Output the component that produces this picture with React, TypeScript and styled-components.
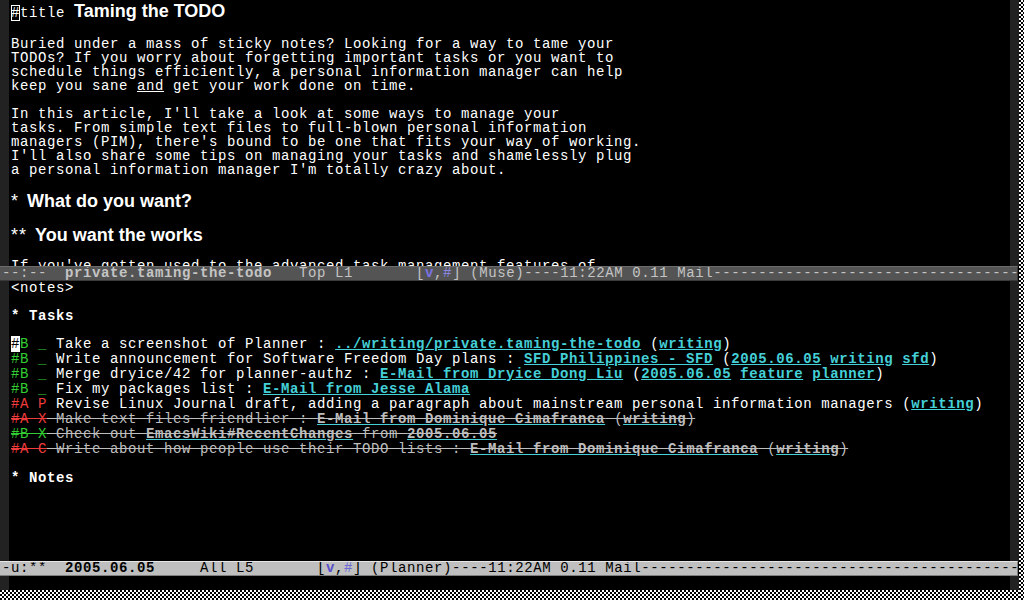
import React from 'react';
import styled, { createGlobalStyle } from 'styled-components';

const MONO = `"Liberation Mono", "DejaVu Sans Mono", monospace`;
const SANS = `"Liberation Sans", Arial, sans-serif`;

const LINK = '#45d0d8';
const GREEN = '#32cd32';
const RED = '#f03c3c';
const DONE = '#bebebe';

const Global = createGlobalStyle`
  html, body { margin: 0; padding: 0; background: #000; }
  body { width: 1024px; height: 600px; overflow: hidden; }
`;

const Screen = styled.div`
  width: 1024px;
  height: 600px;
  background: #000;
  display: grid;
  grid-template-columns: 1019px 5px;
  grid-template-rows: 590px 10px;
  grid-template-areas: "emacs side" "bottom side";
  overflow: hidden;
`;

const Dither = styled.div<{ $area: string }>`
  grid-area: ${p => p.$area};
  background-color: #000;
  background-image: repeating-conic-gradient(#fff 0 25%, #000 0 50%);
  background-size: 4px 4px;
`;

const Emacs = styled.div`
  grid-area: emacs;
  display: flex;
  flex-direction: column;
  font-family: ${MONO};
  font-size: 14px;
  letter-spacing: 0.6px;
  color: #fff;
`;

const WindowBody = styled.div<{ $h: number }>`
  height: ${p => p.$h}px;
  display: grid;
  grid-template-columns: 9px 1fr 9px;
  overflow: hidden;
`;

const Fringe = styled.div`
  background: #222;
`;

const Buffer = styled.div`
  padding-left: 2px;
  overflow: hidden;
  min-width: 0;
`;

const Line = styled.div<{ $h?: number }>`
  height: ${p => p.$h ?? 14}px;
  line-height: ${p => p.$h ?? 14}px;
  white-space: pre;
`;

const TitleLine = styled.div`
  height: 23px;
  line-height: 23px;
  white-space: pre;
  font-family: ${SANS};
  font-size: 18px;
  letter-spacing: normal;
`;

const MonoSpan = styled.span`
  font-family: ${MONO};
  font-size: 14px;
  letter-spacing: 0.6px;
  line-height: 14px;
`;

const HollowCursor = styled(MonoSpan)`
  outline: 1px solid #fff;
  outline-offset: -1px;
`;

const TitleText = styled.span`
  font-weight: bold;
`;

const Heading = styled.div`
  height: 20px;
  line-height: 20px;
  white-space: pre;
  font-family: ${SANS};
  font-size: 18px;
  font-weight: bold;
  letter-spacing: normal;
`;

const Stars = styled.span`
  font-weight: normal;
  letter-spacing: 1px;
  margin-right: 8px;
`;

const Under = styled.span`
  text-decoration: underline;
`;

const BoldLine = styled(Line)`
  font-weight: bold;
`;

const Cursor = styled.span`
  background: #fff;
  color: #000;
`;

const Pri = styled.span<{ $p: 'A' | 'B' }>`
  color: ${p => (p.$p === 'A' ? RED : GREEN)};
`;

const Link = styled.span`
  color: ${LINK};
  font-weight: bold;
  text-decoration: underline;
`;

const Done = styled.span<{ $c?: string }>`
  color: ${p => p.$c ?? DONE};
  text-decoration: line-through;
`;

const DoneLink = styled.span`
  font-weight: bold;
  text-decoration: underline;
  text-decoration-color: ${LINK};
`;

const ModeLine = styled.div<{ $active?: boolean }>`
  height: 15px;
  box-sizing: border-box;
  line-height: 13px;
  margin-right: 1px;
  padding-left: 2px;
  white-space: pre;
  overflow: hidden;
  background: ${p => (p.$active ? '#bfbfbf' : '#545454')};
  color: ${p => (p.$active ? '#000' : '#c4c4c4')};
  border-top: 1px solid ${p => (p.$active ? '#e6e6e6' : '#6c6c6c')};
  border-bottom: 1px solid ${p => (p.$active ? '#7f7f7f' : '#3a3a3a')};
  border-right: 1px solid ${p => (p.$active ? '#7f7f7f' : '#3a3a3a')};
`;

const BufName = styled.span`
  font-weight: bold;
`;

const ModeV = styled.span<{ $active?: boolean }>`
  font-weight: bold;
  color: ${p => (p.$active ? '#5a4fcc' : '#7a72e0')};
`;

const ModeHash = styled.span<{ $active?: boolean }>`
  color: ${p => (p.$active ? '#6c68d8' : '#8a86e0')};
`;

const DASHES = '-'.repeat(130);

const TaskLine = styled(Line).attrs({ $h: 15 })``;

function Window1() {
  return (
    <Buffer>
      <TitleLine>
        <HollowCursor>#</HollowCursor>
        <MonoSpan>title </MonoSpan>
        <TitleText>Taming the TODO</TitleText>
      </TitleLine>
      <Line />
      <Line>Buried under a mass of sticky notes? Looking for a way to tame your</Line>
      <Line>TODOs? If you worry about forgetting important tasks or you want to</Line>
      <Line>schedule things efficiently, a personal information manager can help</Line>
      <Line>
        keep you sane <Under>and</Under> get your work done on time.
      </Line>
      <Line />
      <Line>In this article, I'll take a look at some ways to manage your</Line>
      <Line>tasks. From simple text files to full-blown personal information</Line>
      <Line>managers (PIM), there's bound to be one that fits your way of working.</Line>
      <Line>I'll also share some tips on managing your tasks and shamelessly plug</Line>
      <Line>a personal information manager I'm totally crazy about.</Line>
      <Line />
      <Heading>
        <Stars>*</Stars>What do you want?
      </Heading>
      <Line />
      <Heading>
        <Stars>**</Stars>You want the works
      </Heading>
      <Line />
      <Line>If you've gotten used to the advanced task management features of</Line>
    </Buffer>
  );
}

function Window2() {
  return (
    <Buffer>
      <Line>{'<notes>'}</Line>
      <Line />
      <BoldLine>* Tasks</BoldLine>
      <Line />
      <TaskLine>
        <Cursor>#</Cursor>
        <Pri $p="B">B _</Pri> Take a screenshot of Planner : <Link>../writing/private.taming-the-todo</Link> (
        <Link>writing</Link>)
      </TaskLine>
      <TaskLine>
        <Pri $p="B">#B _</Pri> Write announcement for Software Freedom Day plans : <Link>SFD Philippines - SFD</Link> (
        <Link>2005.06.05</Link> <Link>writing</Link> <Link>sfd</Link>)
      </TaskLine>
      <TaskLine>
        <Pri $p="B">#B _</Pri> Merge dryice/42 for planner-authz : <Link>E-Mail from Dryice Dong Liu</Link> (
        <Link>2005.06.05</Link> <Link>feature</Link> <Link>planner</Link>)
      </TaskLine>
      <TaskLine>
        <Pri $p="B">#B _</Pri> Fix my packages list : <Link>E-Mail from Jesse Alama</Link>
      </TaskLine>
      <TaskLine>
        <Pri $p="A">#A P</Pri> Revise Linux Journal draft, adding a paragraph about mainstream personal information managers (
        <Link>writing</Link>)
      </TaskLine>
      <TaskLine>
        <Done $c={RED}>#A X</Done>
        <Done>
          {' '}Make text files friendlier : <DoneLink>E-Mail from Dominique Cimafranca</DoneLink> (
          <DoneLink>writing</DoneLink>)
        </Done>
      </TaskLine>
      <TaskLine>
        <Done $c={GREEN}>#B X</Done>
        <Done>
          {' '}Check out <DoneLink>EmacsWiki#RecentChanges</DoneLink> from <DoneLink>2005.06.05</DoneLink>
        </Done>
      </TaskLine>
      <TaskLine>
        <Done $c={RED}>#A C</Done>
        <Done>
          {' '}Write about how people use their TODO lists : <DoneLink>E-Mail from Dominique Cimafranca</DoneLink> (
          <DoneLink>writing</DoneLink>)
        </Done>
      </TaskLine>
      <Line />
      <BoldLine>* Notes</BoldLine>
    </Buffer>
  );
}

export default function App() {
  return (
    <>
      <Global />
      <Screen>
        <Emacs>
          <WindowBody $h={266}>
            <Fringe />
            <Window1 />
            <Fringe />
          </WindowBody>
          <ModeLine>
            {'--:--  '}
            <BufName>private.taming-the-todo</BufName>
            {'   Top L1       ['}
            <ModeV>v</ModeV>,<ModeHash>#</ModeHash>
            {'] (Muse)----11:22AM 0.11 Mail' + DASHES}
          </ModeLine>
          <WindowBody $h={280}>
            <Fringe />
            <Window2 />
            <Fringe />
          </WindowBody>
          <ModeLine $active>
            {'-u:**  '}
            <BufName>2005.06.05</BufName>
            {'     All L5       ['}
            <ModeV $active>v</ModeV>,<ModeHash $active>#</ModeHash>
            {'] (Planner)----11:22AM 0.11 Mail' + DASHES}
          </ModeLine>
          <WindowBody $h={14}>
            <Fringe />
            <Buffer />
            <Fringe />
          </WindowBody>
        </Emacs>
        <Dither $area="side" />
        <Dither $area="bottom" />
      </Screen>
    </>
  );
}
